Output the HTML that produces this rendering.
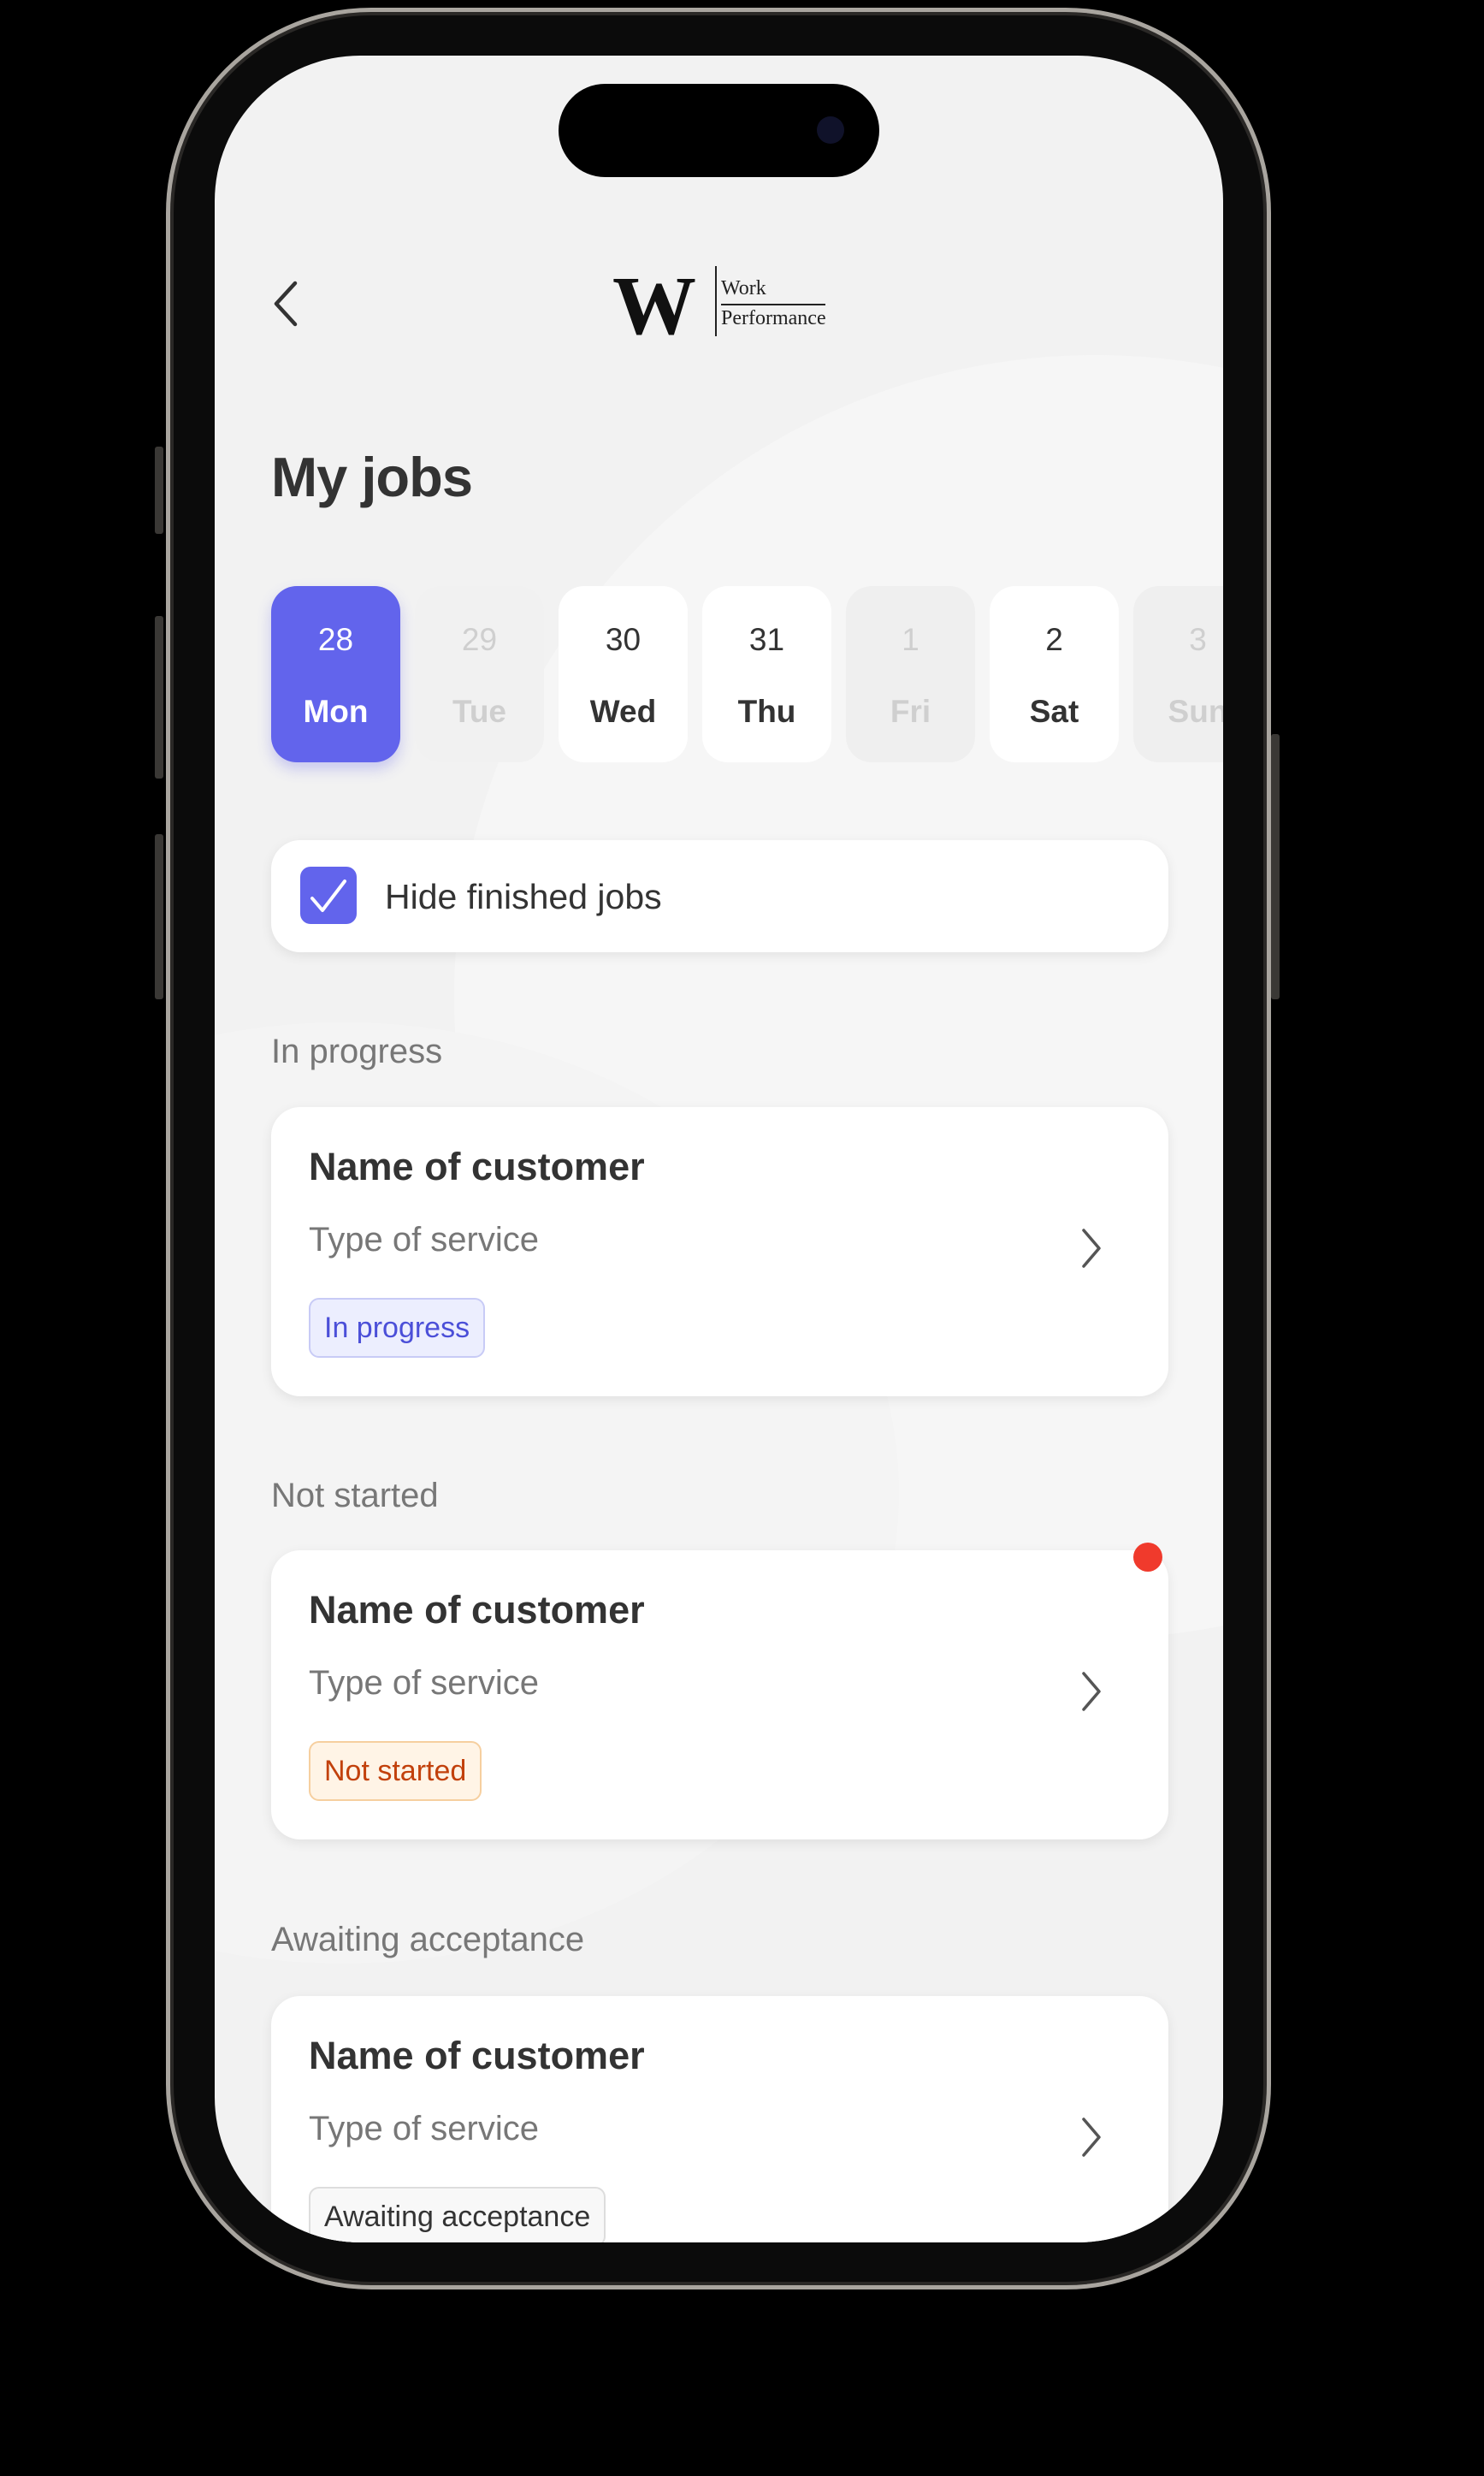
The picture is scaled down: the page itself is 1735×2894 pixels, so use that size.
<!DOCTYPE html>
<html><head><meta charset="utf-8"><style>
*{margin:0;padding:0;box-sizing:border-box}
body{width:1735px;height:2894px;background:#000;position:relative;overflow:hidden;font-family:"Liberation Sans",sans-serif}
.frame{position:absolute;left:194px;top:9px;width:1292px;height:2667px;border-radius:240px;background:#0b0b0b;border:5px solid #a9a59f;box-shadow:inset 0 0 0 4px #2a2826}
.btn{position:absolute;background:#3a3835;border-radius:3px}
.screen{position:absolute;left:251px;top:65px;width:1179px;height:2556px;border-radius:170px;background:#f2f2f2;overflow:hidden}
.circ{position:absolute;border-radius:50%;background:#f6f6f6}
.island{position:absolute;left:402px;top:33px;width:375px;height:109px;border-radius:55px;background:#000}
.cam{position:absolute;left:302px;top:38px;width:32px;height:32px;border-radius:50%;background:#10122a}
.s{position:absolute}
.day{position:absolute;top:620px;width:151px;height:206px;border-radius:30px;text-align:center;color:#333}
.day .n{position:absolute;top:42px;width:100%;font-size:37px}
.day .d{position:absolute;top:126px;width:100%;font-size:37px;font-weight:bold}
.dim{color:#cfcfcf}
.card{position:absolute;left:66px;width:1049px;height:338px;background:#fff;border-radius:34px;box-shadow:0 4px 14px rgba(0,0,0,.08)}
.nm{position:absolute;left:44px;top:44px;font-size:45px;font-weight:bold;color:#333}
.ty{position:absolute;left:44px;top:133px;font-size:40px;color:#777}
.bd{position:absolute;left:44px;top:223px;height:70px;padding:0 16px;line-height:66px;font-size:34px;border-radius:12px;border:2px solid}
.chev{position:absolute;left:947px;top:142px}
.lbl{position:absolute;left:66px;font-size:40px;color:#777}
</style></head><body>
<div class="btn" style="left:181px;top:522px;width:10px;height:102px"></div>
<div class="btn" style="left:181px;top:720px;width:10px;height:190px"></div>
<div class="btn" style="left:181px;top:975px;width:10px;height:193px"></div>
<div class="btn" style="left:1486px;top:858px;width:10px;height:310px"></div>
<div class="frame"></div>
<div class="screen">
 <div class="circ" style="left:280px;top:350px;width:1500px;height:1500px"></div>
 <div class="circ" style="left:-500px;top:1130px;width:1300px;height:1100px;background:#f4f4f4"></div>
 <div class="island"><div class="cam"></div></div>
 <svg class="s" style="left:66px;top:262px" width="34" height="56" viewBox="0 0 34 56"><path d="M28 4 L6 28 L28 52" fill="none" stroke="#333" stroke-width="4.5" stroke-linecap="round" stroke-linejoin="round"/></svg>
 <div class="s" style="left:465px;top:243px;font-family:'Liberation Serif',serif;font-weight:bold;font-size:98px;color:#111;line-height:100px;letter-spacing:-8px">W</div>
 <div class="s" style="left:585px;top:246px;width:2px;height:82px;background:#222"></div>
 <div class="s" style="left:592px;top:259px;font-family:'Liberation Serif',serif;font-size:24px;color:#222">Work</div>
 <div class="s" style="left:592px;top:290px;width:122px;height:2px;background:#222"></div>
 <div class="s" style="left:592px;top:294px;font-family:'Liberation Serif',serif;font-size:24px;color:#222">Performance</div>
 <div class="s" style="left:66px;top:455px;font-size:65px;font-weight:bold;color:#333;letter-spacing:-1px">My jobs</div>
 <div class="day" style="left:66px;background:#6264ec;color:#fff;box-shadow:0 8px 16px rgba(98,100,236,.3)"><div class="n">28</div><div class="d">Mon</div></div>
 <div class="day dim" style="left:234px;background:#f1f1f1"><div class="n">29</div><div class="d">Tue</div></div>
 <div class="day" style="left:402px;background:#fff"><div class="n">30</div><div class="d">Wed</div></div>
 <div class="day" style="left:570px;background:#fff"><div class="n">31</div><div class="d">Thu</div></div>
 <div class="day dim" style="left:738px;background:#efefef"><div class="n">1</div><div class="d">Fri</div></div>
 <div class="day" style="left:906px;background:#fff"><div class="n">2</div><div class="d">Sat</div></div>
 <div class="day dim" style="left:1074px;background:#efefef"><div class="n">3</div><div class="d">Sun</div></div>
 <div class="card" style="top:917px;height:131px">
  <div class="s" style="left:34px;top:31px;width:66px;height:67px;border-radius:12px;background:#6264ec"></div>
  <svg class="s" style="left:42px;top:40px" width="50" height="50" viewBox="0 0 50 50"><path d="M6 28 L18 42 L44 8" fill="none" stroke="#fff" stroke-width="4" stroke-linecap="round" stroke-linejoin="round"/></svg>
  <div class="s" style="left:133px;top:43px;font-size:41px;color:#333">Hide finished jobs</div>
 </div>
 <div class="lbl" style="top:1142px">In progress</div>
 <div class="card" style="top:1229px">
  <div class="nm">Name of customer</div><div class="ty">Type of service</div>
  <div class="bd" style="background:#eceefe;border-color:#c8cbf6;color:#4b4fd8">In progress</div>
  <svg class="chev" width="24" height="46" viewBox="0 0 24 46"><path d="M3 2 L21 23 L3 44" fill="none" stroke="#555" stroke-width="3.5" stroke-linecap="round" stroke-linejoin="round"/></svg>
 </div>
 <div class="lbl" style="top:1661px">Not started</div>
 <div class="card" style="top:1747px">
  <div class="nm">Name of customer</div><div class="ty">Type of service</div>
  <div class="bd" style="background:#fff4e6;border-color:#f6cf9f;color:#c2410c">Not started</div>
  <svg class="chev" width="24" height="46" viewBox="0 0 24 46"><path d="M3 2 L21 23 L3 44" fill="none" stroke="#555" stroke-width="3.5" stroke-linecap="round" stroke-linejoin="round"/></svg>
  <div class="s" style="left:1008px;top:-9px;width:34px;height:34px;border-radius:50%;background:#f03a2c"></div>
 </div>
 <div class="lbl" style="top:2180px">Awaiting acceptance</div>
 <div class="card" style="top:2268px">
  <div class="nm">Name of customer</div><div class="ty">Type of service</div>
  <div class="bd" style="background:#f8f8f8;border-color:#ddd;color:#333">Awaiting acceptance</div>
  <svg class="chev" width="24" height="46" viewBox="0 0 24 46"><path d="M3 2 L21 23 L3 44" fill="none" stroke="#555" stroke-width="3.5" stroke-linecap="round" stroke-linejoin="round"/></svg>
 </div>
</div>
</body></html>
